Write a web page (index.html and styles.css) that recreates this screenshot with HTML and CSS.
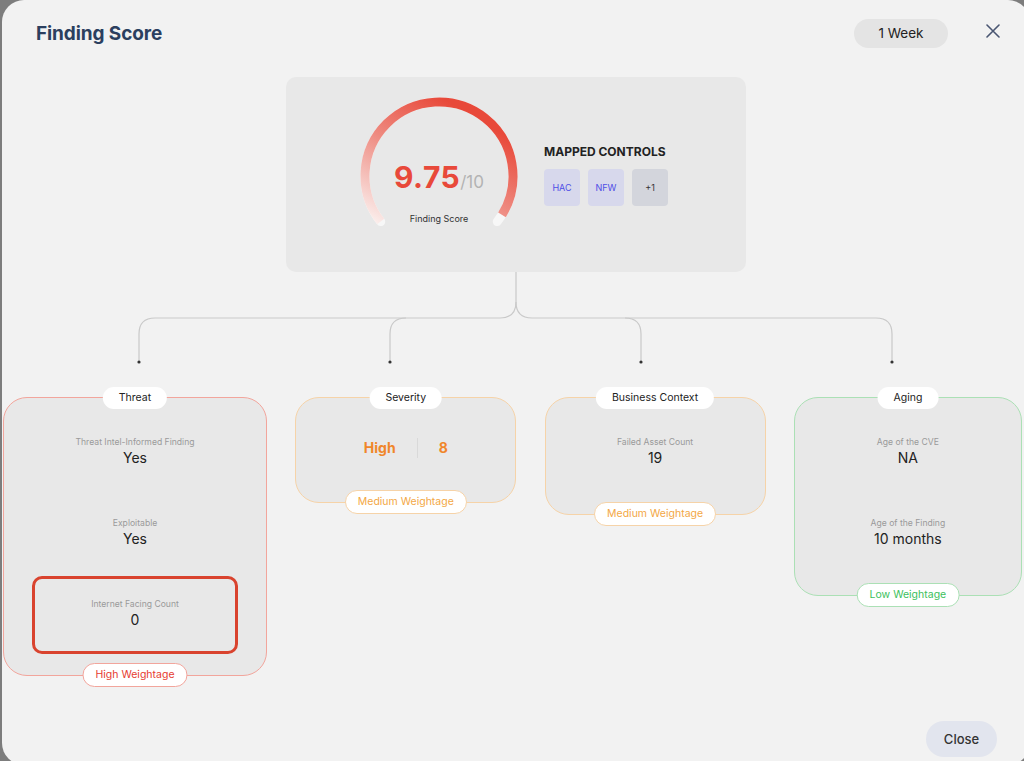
FILE: index.html
```html
<!DOCTYPE html>
<html lang="en">
<head>
    <meta charset="UTF-8">
    <meta name="viewport" content="width=device-width, initial-scale=1.0">
    <title>Finding Score</title>
    <link rel="stylesheet" href="styles.css">
</head>
<body>
    <div class="modal">
        <div class="modal-header">
            <h1>Finding Score</h1>
            <div class="header-actions">
                <span class="range-pill">1 Week</span>
                <svg class="close-x" width="14" height="14" viewBox="0 0 14 14">
                    <path d="M1 1 L13 13 M13 1 L1 13" stroke="#4a5672" stroke-width="1.6" fill="none" stroke-linecap="round"/>
                </svg>
            </div>
        </div>

        <div class="score-card">
            <div class="gauge">
                <svg width="170" height="150" viewBox="0 0 170 150">
                    <defs>
                        <linearGradient id="arcGrad" gradientUnits="userSpaceOnUse" x1="22" y1="135" x2="95" y2="12">
                            <stop offset="0" stop-color="#fbf0ee"/>
                            <stop offset="0.55" stop-color="#ee8a80"/>
                            <stop offset="1" stop-color="#e8493a"/>
                        </linearGradient>
                    </defs>
                    <path d="M26.7 131.6 A74 74 0 1 1 143.3 131.6" stroke="#f7f7f7" stroke-width="9" fill="none" stroke-linecap="round"/>
                    <path d="M26.7 131.6 A74 74 0 1 1 148.0 124.8" stroke="url(#arcGrad)" stroke-width="9" fill="none"/>
                </svg>
                <div class="gauge-value"><span class="score">9.75</span><span class="out-of">/10</span></div>
                <div class="gauge-label">Finding Score</div>
            </div>
            <div class="controls">
                <h3>MAPPED CONTROLS</h3>
                <div class="chips">
                    <span class="chip">HAC</span>
                    <span class="chip">NFW</span>
                    <span class="chip more">+1</span>
                </div>
            </div>
        </div>

        <svg class="connectors" width="1028" height="114" viewBox="0 0 1028 114">
            <g stroke="#c9c9c9" stroke-width="1.2" fill="none">
                <path d="M514 0 V30 Q514 46 498 46 H153 Q137 46 137 62 V90"/>
                <path d="M404 46 Q388 46 388 62 V90"/>
                <path d="M514 30 Q514 46 530 46 H874 Q890 46 890 62 V90"/>
                <path d="M623 46 Q639 46 639 62 V90"/>
            </g>
            <g fill="#333">
                <circle cx="137" cy="90" r="1.6"/>
                <circle cx="388" cy="90" r="1.6"/>
                <circle cx="639" cy="90" r="1.6"/>
                <circle cx="890" cy="90" r="1.6"/>
            </g>
        </svg>

        <div class="factors">
            <div class="card high threat">
                <span class="card-title">Threat</span>
                <div class="metric">
                    <div class="metric-label">Threat Intel-Informed Finding</div>
                    <div class="metric-value">Yes</div>
                </div>
                <div class="metric second">
                    <div class="metric-label">Exploitable</div>
                    <div class="metric-value">Yes</div>
                </div>
                <div class="metric highlight">
                    <div class="metric-label">Internet Facing Count</div>
                    <div class="metric-value">0</div>
                </div>
                <span class="weight">High Weightage</span>
            </div>

            <div class="card medium severity">
                <span class="card-title">Severity</span>
                <div class="severity-row">
                    <span>High</span>
                    <span class="divider"></span>
                    <span>8</span>
                </div>
                <span class="weight">Medium Weightage</span>
            </div>

            <div class="card medium">
                <span class="card-title">Business Context</span>
                <div class="metric">
                    <div class="metric-label">Failed Asset Count</div>
                    <div class="metric-value">19</div>
                </div>
                <span class="weight">Medium Weightage</span>
            </div>

            <div class="card low">
                <span class="card-title">Aging</span>
                <div class="metric">
                    <div class="metric-label">Age of the CVE</div>
                    <div class="metric-value">NA</div>
                </div>
                <div class="metric second">
                    <div class="metric-label">Age of the Finding</div>
                    <div class="metric-value">10 months</div>
                </div>
                <span class="weight">Low Weightage</span>
            </div>
        </div>

        <div class="modal-footer">
            <button class="close-btn">Close</button>
        </div>
    </div>
</body>
</html>
```

FILE: styles.css
```css
html, body { margin: 0; height: 761px; overflow: hidden; }
body { background: #7d7d7d; font-family: Inter, "Noto Sans", sans-serif; color: #222; }

.modal { width: 1028px; height: 765px; margin-left: 2px; background: #f2f2f2; border-radius: 22px; }

.modal-header { display: flex; align-items: center; justify-content: space-between; height: 30px; padding: 18px 30px 0 34px; margin-bottom: 29px; }
.modal-header h1 { margin: 0; font-size: 19px; font-weight: 700; color: #2b3f5f; letter-spacing: -0.1px; }
.header-actions { display: flex; align-items: center; gap: 38px; }
.range-pill { width: 94px; height: 29px; line-height: 29px; text-align: center; background: #e4e4e4; border-radius: 15px; font-size: 13.5px; color: #222; }
.close-x { display: block; margin-top: -4px; }

.score-card { width: 460px; height: 195px; margin: 0 auto; background: #e8e8e8; border-radius: 10px; display: flex; align-items: flex-start; gap: 20px; padding: 13px 0 0 68px; box-sizing: border-box; }
.gauge { position: relative; width: 170px; height: 150px; }
.gauge svg { display: block; }
.gauge-value { position: absolute; left: 0; right: 0; top: 70px; line-height: 34px; text-align: center; }
.score { font-size: 30px; font-weight: 700; color: #e8493a; letter-spacing: 0.5px; }
.out-of { font-size: 17px; color: #b3b3b3; }
.gauge-label { position: absolute; left: 0; right: 0; top: 123px; line-height: 12px; text-align: center; font-size: 9px; color: #333; }

.controls { padding-top: 55px; }
.controls h3 { margin: 0; font-size: 12px; line-height: 14px; font-weight: 700; color: #222; }
.chips { display: flex; gap: 8px; margin-top: 10px; }
.chip { width: 36px; height: 37px; line-height: 37px; text-align: center; border-radius: 4px; background: #d7d8ec; color: #4f4fe6; font-size: 9px; }
.chip.more { background: #d3d5dc; color: #333; }

.connectors { display: block; }

.factors { display: grid; grid-template-columns: 264px 221px 221px 228px; column-gap: 28.3px; align-items: start; padding-left: 1px; }
.card { position: relative; margin-top: 11px; background: #e8e8e8; border: 1px solid #f2a59c; border-radius: 24px; padding: 38px 20px 47px; text-align: center; }
.card.high { padding-bottom: 21px; }
.card.medium { border-color: #f6d3a8; }
.card.low { border-color: #abe0b5; }

.card-title { position: absolute; top: -11px; left: 50%; transform: translateX(-50%); height: 22px; line-height: 22px; padding: 0 16px; background: #fff; border-radius: 11px; font-size: 10.5px; color: #222; white-space: nowrap; }
.weight { position: absolute; bottom: -12px; left: 50%; transform: translateX(-50%); height: 22px; line-height: 22px; padding: 0 12px; background: #fff; border: 1px solid #f2a59c; border-radius: 12px; font-size: 10.5px; color: #e63b30; white-space: nowrap; }
.card.medium .weight { border-color: #f6d3a8; color: #f3a745; }
.card.low .weight { border-color: #abe0b5; color: #3cbf5c; }

.metric-label { font-size: 8.6px; line-height: 12px; color: #9a9a9a; }
.metric-value { font-size: 14px; line-height: 18px; margin-top: 1px; color: #222; }
.metric.second { margin-top: 50px; }
.metric.highlight { margin: 28px 8px 0 8px; border: 3px solid #d9432e; border-radius: 10px; padding: 19px 0 22px; }

.card.severity { padding-top: 40px; padding-bottom: 44px; }
.severity-row { display: flex; align-items: center; justify-content: center; gap: 21px; font-size: 14px; line-height: 18px; font-weight: 700; color: #f0862a; }
.severity-row .divider { width: 1px; height: 20px; background: #d9d9d9; }

.modal-footer { display: flex; justify-content: flex-end; padding-right: 33px; margin-top: 45px; }
.close-btn { width: 71px; height: 36px; border: none; border-radius: 18px; background: #e2e5ee; font-family: Inter, "Noto Sans", sans-serif; font-size: 13px; font-weight: 500; color: #333; cursor: pointer; }
```
